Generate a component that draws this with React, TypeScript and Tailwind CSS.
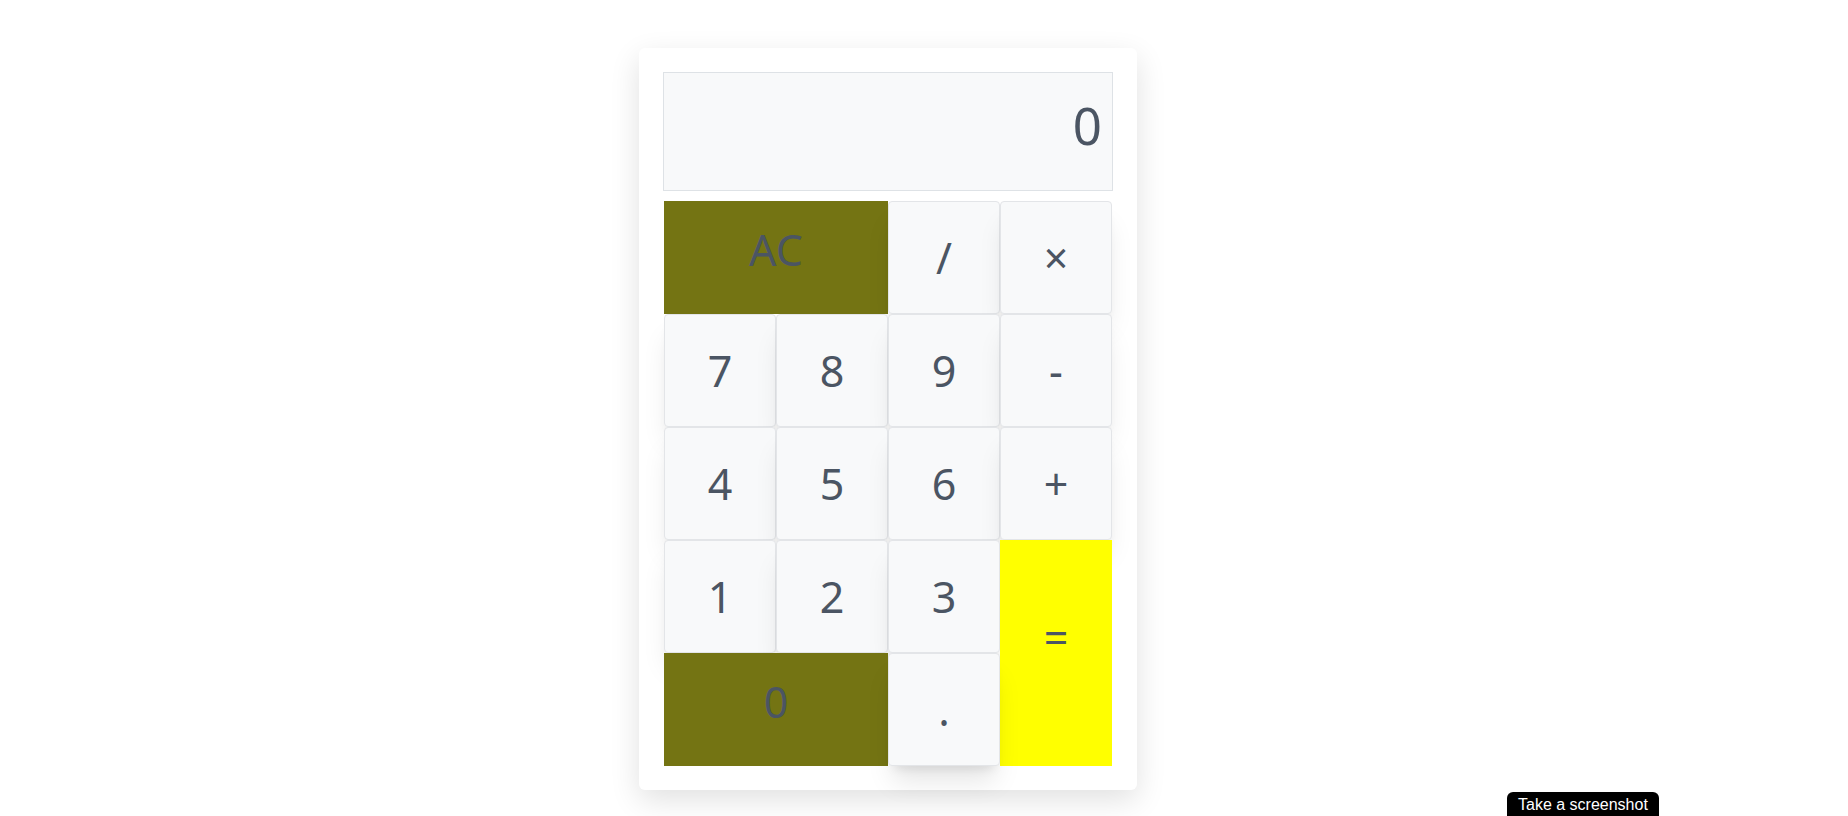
const keys = [
  { label: "AC", kind: "olive", span: "col-span-2" },
  { label: "/", kind: "gray", span: "" },
  { label: "×", kind: "gray", span: "" },
  { label: "7", kind: "gray", span: "" },
  { label: "8", kind: "gray", span: "" },
  { label: "9", kind: "gray", span: "" },
  { label: "-", kind: "gray", span: "" },
  { label: "4", kind: "gray", span: "" },
  { label: "5", kind: "gray", span: "" },
  { label: "6", kind: "gray", span: "" },
  { label: "+", kind: "gray", span: "" },
  { label: "1", kind: "gray", span: "" },
  { label: "2", kind: "gray", span: "" },
  { label: "3", kind: "gray", span: "" },
  { label: "=", kind: "yellow", span: "row-span-2" },
  { label: "0", kind: "olive", span: "col-span-2" },
  { label: ".", kind: "gray", span: "" },
];

function Key({ label, kind, span }: { label: string; kind: string; span: string }) {
  let look = "bg-[#f8f9fa] border border-[#e3e5e8] rounded-[4px] shadow-xl";
  if (kind === "olive") look = "bg-[#747413] pb-[16px]";
  if (kind === "yellow") look = "bg-[#ffff00] pb-[31px]";
  return (
    <button
      className={`${span} ${look} flex items-center justify-center text-[43px] leading-none text-[#4b5563]`}
    >
      {label}
    </button>
  );
}

export default function App() {
  return (
    <div className="min-h-screen bg-white font-['Noto_Sans',sans-serif]">
      <div className="flex justify-center pr-[72px] pt-12">
        <div className="w-[498px] bg-white rounded-md shadow-[0_10px_30px_rgba(0,0,0,0.12)] p-6">
          <div className="h-[119px] bg-[#f8f9fa] border border-[#dee2e6] text-right text-[51px] leading-normal text-[#4b5563] pr-[10px] pt-[14px]">
            0
          </div>
          <div className="mt-[10px] px-px grid grid-cols-[repeat(4,112px)] grid-rows-[repeat(5,113px)]">
            {keys.map((k) => (
              <Key key={k.label} {...k} />
            ))}
          </div>
        </div>
      </div>
      <div className="fixed left-[1507px] top-[792px] bg-black text-white text-[16px] leading-[26px] px-[11px] rounded-t-md font-['Liberation_Sans',sans-serif]">
        Take a screenshot
      </div>
    </div>
  );
}
